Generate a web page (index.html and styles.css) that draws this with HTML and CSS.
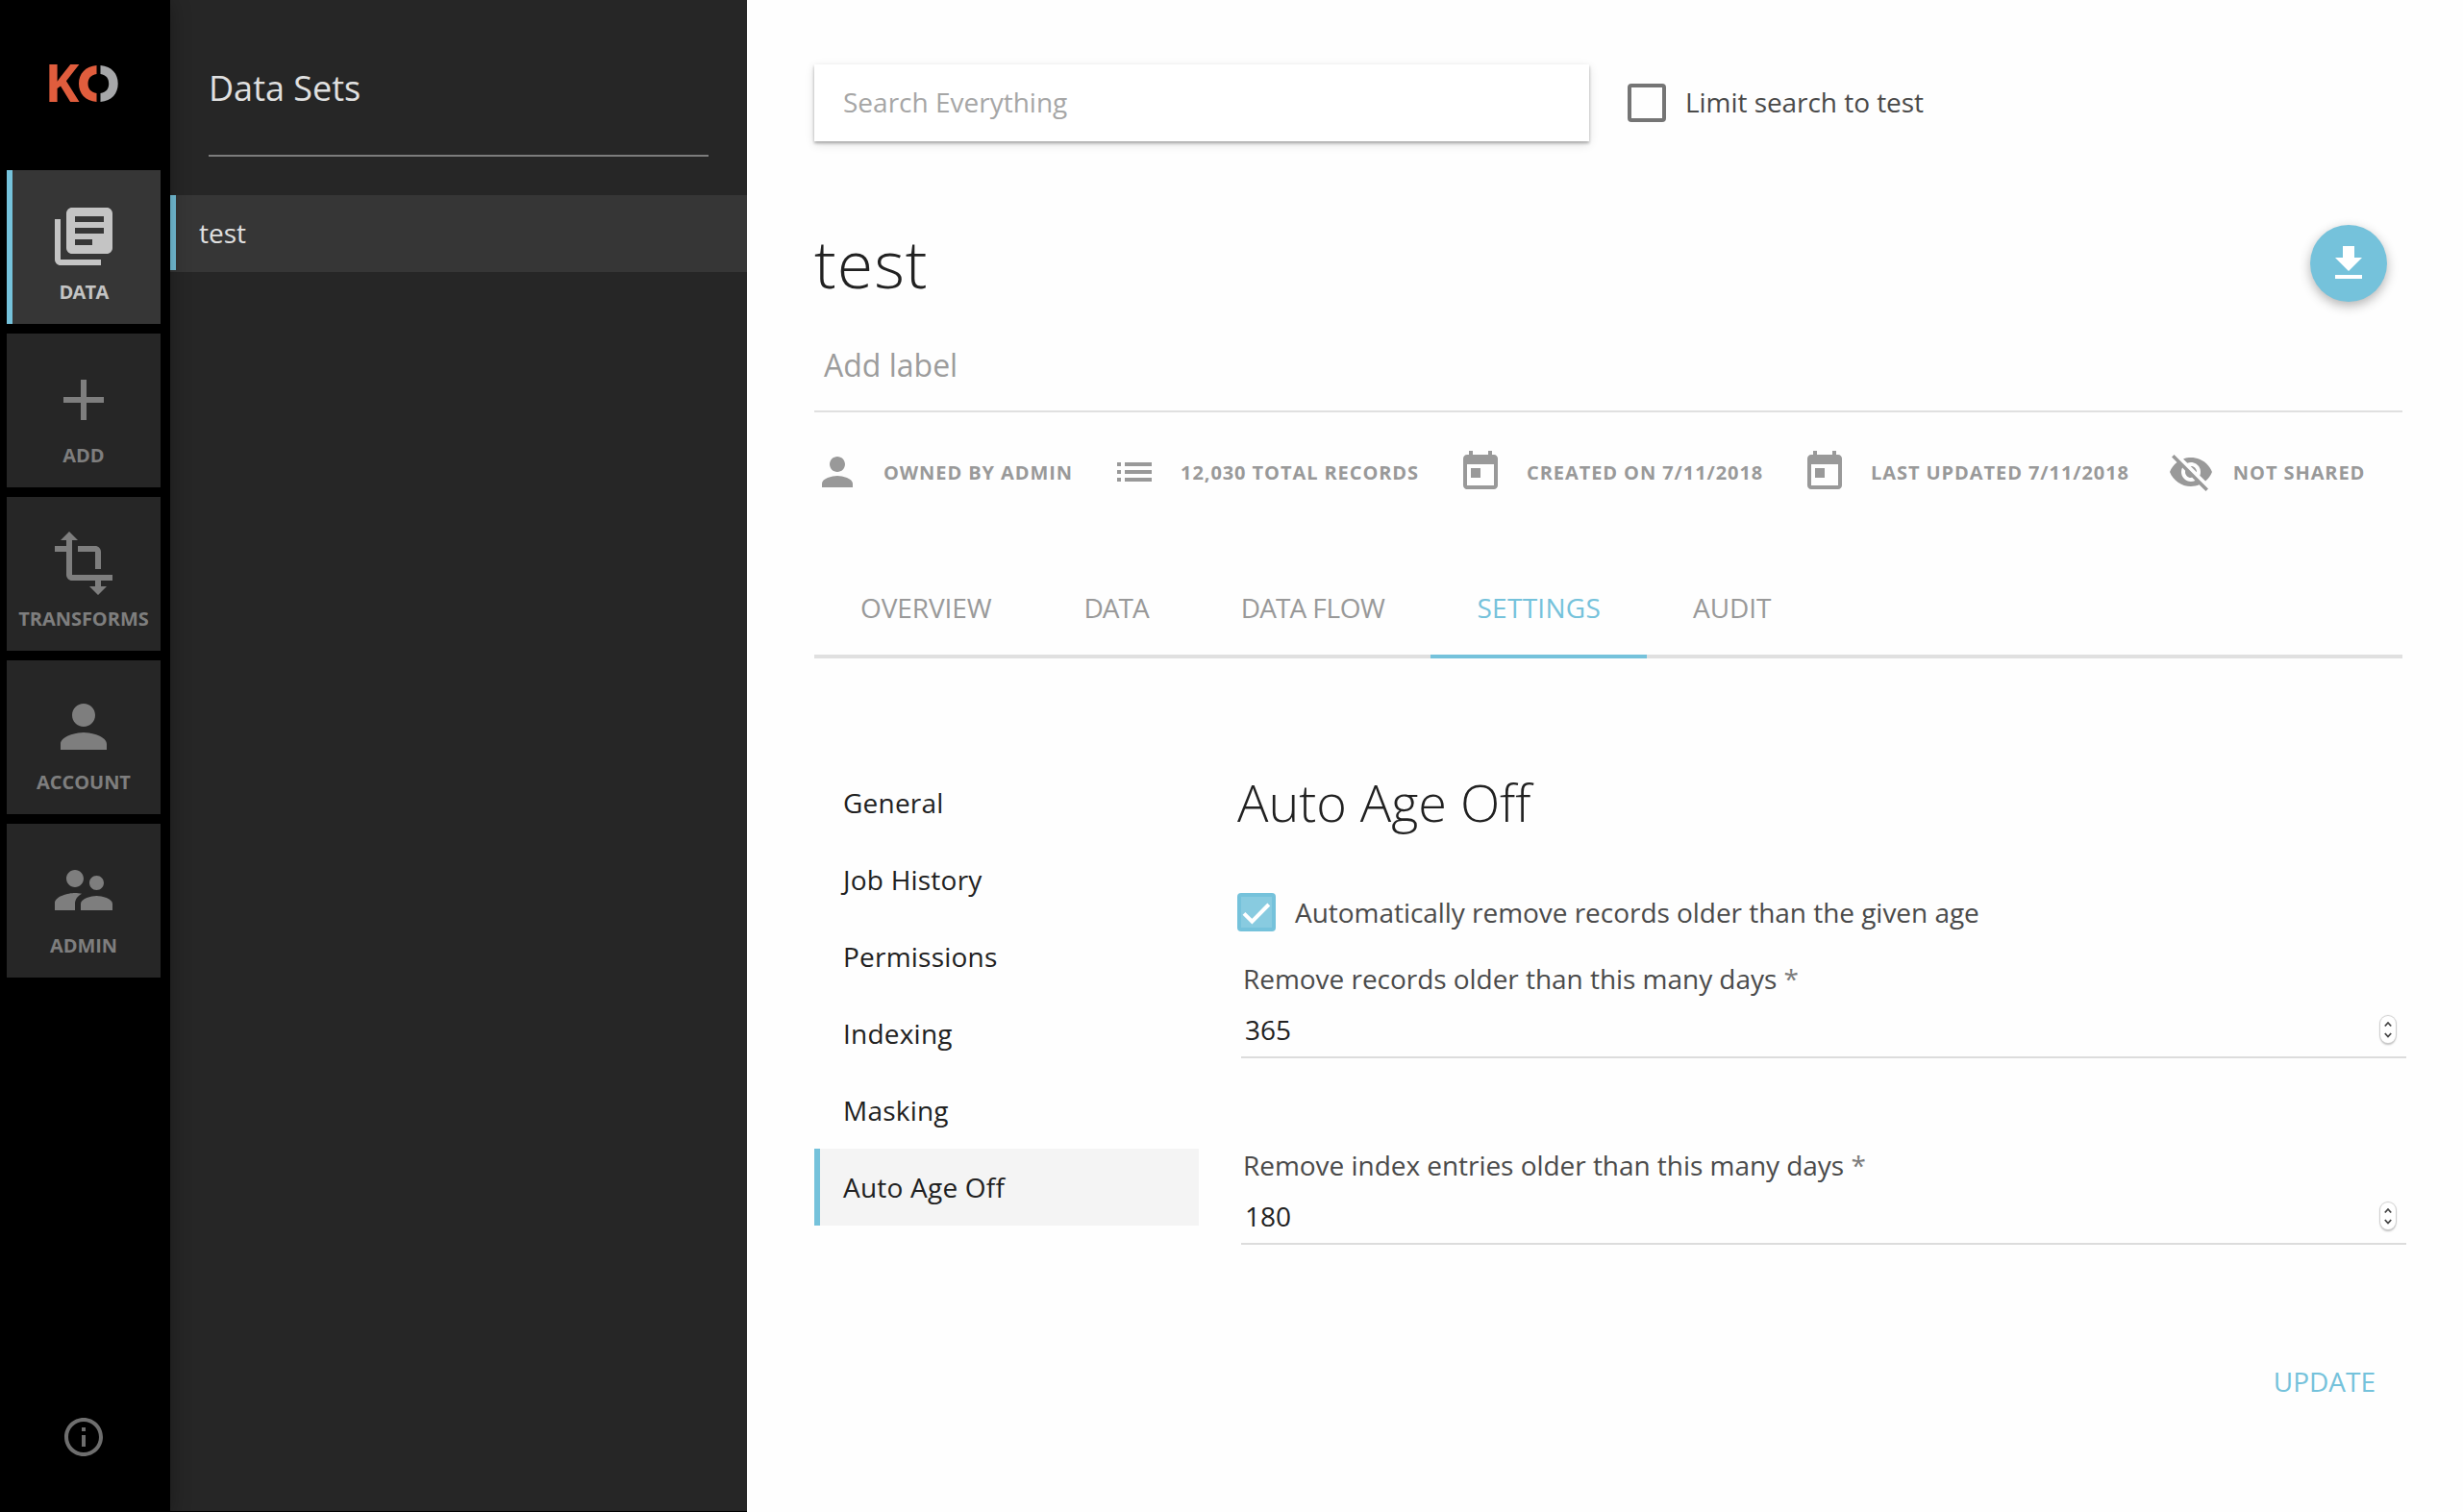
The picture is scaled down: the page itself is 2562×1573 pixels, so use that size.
FILE: index.html
```html
<!DOCTYPE html>
<html lang="en">
<head>
<meta charset="utf-8">
<title>Data Sets</title>
<link rel="stylesheet" href="styles.css">
</head>
<body>
<div class="app">
  <nav class="rail">
    <div class="logo">
      <svg width="96" height="80" viewBox="-11 -25 96 80">
        <text class="logo-k" x="-3.500" y="39" textLength="36" lengthAdjust="spacingAndGlyphs">K</text>
        <path fill="#e05d3d" d="M50.500 1C38.500 2 32 10 32 20S38.500 38 50.500 39V30C44.500 29 41.500 25.500 41.500 20S44.500 11 50.500 10Z"/>
        <path fill="#a6a7a9" d="M54.500 1C66.500 2 72.700 10 72.700 20S66.500 38 54.500 39V30C60.500 29 63.200 25.500 63.200 20S60.500 11 54.500 10Z"/>
      </svg>
    </div>
    <a class="tile active"><svg class="icon" viewBox="0 0 24 24"><path d="M4 6H2v14c0 1.100.9 2 2 2h14v-2H4V6zm16-4H8c-1.100 0-2 .9-2 2v12c0 1.100.9 2 2 2h12c1.100 0 2-.9 2-2V4c0-1.100-.9-2-2-2zm-1 9H9V9h10v2zm-4 4H9v-2h6v2zm4-8H9V5h10v2z"/></svg><span class="snug">DATA</span></a>
    <a class="tile"><svg class="icon" viewBox="0 0 24 24"><path d="M19 13h-6v6h-2v-6H5v-2h6V5h2v6h6v2z"/></svg><span>ADD</span></a>
    <a class="tile"><svg class="icon" viewBox="0 0 24 24"><path d="M22 18v-2H8V4h2L7 1 4 4h2v2H2v2h4v8c0 1.100.9 2 2 2h8v2h-2l3 3 3-3h-2v-2h4zM10 8h6v6h2V8c0-1.100-.9-2-2-2h-6v2z"/></svg><span>TRANSFORMS</span></a>
    <a class="tile"><svg class="icon" viewBox="0 0 24 24"><path d="M12 12c2.210 0 4-1.790 4-4s-1.790-4-4-4-4 1.790-4 4 1.790 4 4 4zm0 2c-2.670 0-8 1.340-8 4v2h16v-2c0-2.660-5.330-4-8-4z"/></svg><span>ACCOUNT</span></a>
    <a class="tile"><svg class="icon" viewBox="0 0 24 24"><path d="M16.500 12c1.380 0 2.490-1.120 2.490-2.500S17.880 7 16.500 7C15.120 7 14 8.120 14 9.500s1.120 2.500 2.500 2.500zM9 11c1.660 0 2.990-1.340 2.990-3S10.660 5 9 5C7.340 5 6 6.340 6 8s1.340 3 3 3zm7.500 3c-1.830 0-5.500.92-5.500 2.750V19h11v-2.250c0-1.830-3.670-2.750-5.500-2.750zM9 13c-2.330 0-7 1.170-7 3.500V19h7v-2.250c0-.85.33-2.340 2.370-3.470C10.500 13.100 9.660 13 9 13z"/></svg><span>ADMIN</span></a>
    <svg class="info" viewBox="0 0 24 24"><path d="M11 17h2v-6h-2v6zm1-15C6.480 2 2 6.480 2 12s4.480 10 10 10 10-4.480 10-10S17.520 2 12 2zm0 18c-4.410 0-8-3.590-8-8s3.590-8 8-8 8 3.590 8 8-3.590 8-8 8zM11 9h2V7h-2v2z"/></svg>
  </nav>

  <aside class="panel">
    <h2 class="panel-title">Data Sets</h2>
    <a class="set">test</a>
  </aside>

  <main class="main">
    <div class="search-row">
      <div class="search">Search Everything</div>
      <span class="box"></span>
      <span class="limit">Limit search to test</span>
    </div>

    <header class="title-row">
      <h1 class="title">test</h1>
      <button class="fab"><svg viewBox="0 0 24 24"><path d="M19 9h-4V3H9v6H5l7 7 7-7zM5 18v2h14v-2H5z"/></svg></button>
    </header>
    <div class="add-label">Add label</div>

    <div class="meta">
      <div class="meta-item"><svg viewBox="0 0 24 24"><path d="M12 12c2.210 0 4-1.790 4-4s-1.790-4-4-4-4 1.790-4 4 1.790 4 4 4zm0 2c-2.670 0-8 1.340-8 4v2h16v-2c0-2.660-5.330-4-8-4z"/></svg><span>OWNED BY ADMIN</span></div>
      <div class="meta-item"><svg viewBox="0 0 24 24"><path d="M3 13h2v-2H3v2zm0 4h2v-2H3v2zm0-8h2V7H3v2zm4 4h14v-2H7v2zm0 4h14v-2H7v2zM7 7v2h14V7H7z"/></svg><span>12,030 TOTAL RECORDS</span></div>
      <div class="meta-item"><svg viewBox="0 0 24 24"><path d="M19 3h-1V1h-2v2H8V1H6v2H5c-1.110 0-1.990.9-1.990 2L3 19c0 1.100.89 2 2 2h14c1.100 0 2-.9 2-2V5c0-1.100-.9-2-2-2zm0 16H5V8h14v11zM7 10h5v5H7z"/></svg><span>CREATED ON 7/11/2018</span></div>
      <div class="meta-item"><svg viewBox="0 0 24 24"><path d="M19 3h-1V1h-2v2H8V1H6v2H5c-1.110 0-1.990.9-1.990 2L3 19c0 1.100.89 2 2 2h14c1.100 0 2-.9 2-2V5c0-1.100-.9-2-2-2zm0 16H5V8h14v11zM7 10h5v5H7z"/></svg><span>LAST UPDATED 7/11/2018</span></div>
      <div class="meta-item tight"><svg viewBox="0 0 24 24"><path d="M12 7c2.760 0 5 2.240 5 5 0 .65-.13 1.260-.36 1.830l2.920 2.920c1.510-1.260 2.700-2.890 3.430-4.750-1.730-4.390-6-7.500-11-7.500-1.400 0-2.740.25-3.980.7l2.160 2.160C10.740 7.130 11.350 7 12 7zM2 4.270l2.280 2.280.46.46C3.080 8.300 1.780 10.020 1 12c1.730 4.390 6 7.500 11 7.500 1.550 0 3.030-.3 4.380-.84l.42.42L19.730 22 21 20.730 3.270 3 2 4.270zM7.530 9.800l1.550 1.550c-.05.21-.08.43-.08.650 0 1.660 1.340 3 3 3 .22 0 .44-.03.650-.08l1.550 1.550c-.67.33-1.410.53-2.200.53-2.760 0-5-2.240-5-5 0-.79.2-1.530.53-2.200zm4.310-.78l3.150 3.150.02-.16c0-1.660-1.340-3-3-3l-.17.010z"/></svg><span>NOT SHARED</span></div>
    </div>

    <div class="tabs">
      <a class="tab">OVERVIEW</a>
      <a class="tab"><span class="snug">DATA</span></a>
      <a class="tab"><span class="snug">DATA</span> <span class="semi">FLOW</span></a>
      <a class="tab selected">SETTINGS</a>
      <a class="tab">AUDIT</a>
    </div>

    <div class="settings">
      <div class="subnav">
        <a>General</a>
        <a>Job History</a>
        <a>Permissions</a>
        <a>Indexing</a>
        <a>Masking</a>
        <a class="current">Auto Age Off</a>
      </div>
      <section class="form">
        <h2 class="form-title">Auto Age Off</h2>
        <div class="check-row">
          <svg class="checked" viewBox="0 0 40 40"><rect width="40" height="40" rx="4" fill="#75c2db"/><rect x="4" y="4" width="32" height="32" fill="#88cbe0"/><path d="M7 21.300L15.400 29.600L32.800 12" fill="none" stroke="#fff" stroke-width="4"/></svg>
          <span>Automatically remove records older than the given age</span>
        </div>
        <div class="field">
          <label>Remove records older than this many days <i>*</i></label>
          <div class="value"><span>365</span><svg class="spin" viewBox="0 0 16 28"><path d="M4.800 10.500L8 7L11.200 10.500M4.800 18L8 21.500L11.200 18"/></svg></div>
        </div>
        <div class="field">
          <label>Remove index entries older than this many days <i>*</i></label>
          <div class="value"><span>180</span><svg class="spin" viewBox="0 0 16 28"><path d="M4.800 10.500L8 7L11.200 10.500M4.800 18L8 21.500L11.200 18"/></svg></div>
        </div>
        <button class="update">UPDATE</button>
      </section>
    </div>
  </main>
</div>
</body>
</html>
```
FILE: styles.css
```css
* { box-sizing: border-box; }
body {
  margin: 0;
  font-family: "Open Sans", "Noto Sans", sans-serif;
  font-size: 28px;
  font-kerning: normal;
  text-rendering: optimizeLegibility;
  color: #212121;
  background: #fefefe;
}
h1, h2 { margin: 0; font-weight: 300; }
button { border: 0; padding: 0; background: none; font: inherit; }
svg { display: block; flex: none; }

.app { display: flex; width: 2562px; height: 1573px; overflow: hidden; }

/* Icon rail */
.rail {
  position: relative;
  z-index: 1;
  flex: none;
  width: 177px;
  padding: 42px 10px 54px 7px;
  display: flex;
  flex-direction: column;
  align-items: center;
  gap: 10px;
  background: #000;
  box-shadow: 0 2px 20px rgba(0, 0, 0, .3);
}
.logo { height: 125px; }
.logo-k { font-size: 53px; font-weight: 700; fill: #e05d3d; }
.tile {
  flex: none;
  width: 160px;
  height: 160px;
  padding-top: 33px;
  display: flex;
  flex-direction: column;
  align-items: center;
  background: #262626;
  color: #7e7e7e;
  font-size: 20px;
  line-height: 28px;
  font-weight: 700;
  letter-spacing: -.05px;
}
.tile span { margin-top: 8px; }
.tile .snug { letter-spacing: -.8px; }
.tile.active { background: #363636; color: #c4c4c4; box-shadow: inset 6px 0 #75c2db; }
.icon { width: 72px; height: 72px; fill: currentColor; }
.info { width: 48px; height: 48px; margin-top: auto; fill: #6e6e6e; }

/* Data set list */
.panel {
  flex: none;
  width: 600px;
  background: #262626;
  color: #e0e0e0;
  border-bottom: 1px solid #000;
}
.panel-title {
  margin: 0 40px 40px;
  height: 163px;
  padding-top: 67px;
  border-bottom: 2px solid #7c7c7c;
  font-size: 36px;
  line-height: 50px;
  font-weight: 400;
}
.set {
  display: block;
  height: 80px;
  padding-left: 30px;
  line-height: 78px;
  background: linear-gradient(#75c2db, #75c2db) 0 0 / 6px 78px no-repeat #363636;
}

/* Main column */
.main { flex: 1; padding: 67px 63px 0 70px; }
.search-row { display: flex; align-items: center; height: 80px; }
.search {
  width: 806px;
  height: 80px;
  padding-left: 30px;
  line-height: 78px;
  color: #a6a6a6;
  background: #fff;
  box-shadow: 0 2px 3px rgba(0, 0, 0, .3), 0 3px 10px rgba(0, 0, 0, .12);
}
.box { width: 40px; height: 40px; margin: 0 20px 0 40px; border: 4px solid #757575; border-radius: 4px; }
.limit { height: 80px; line-height: 78px; color: #4a4a4a; letter-spacing: -.05px; }

.title-row { display: flex; justify-content: space-between; height: 100px; margin-top: 77px; padding: 10px 16px 0 0; }
.title { font-size: 68px; line-height: 80px; letter-spacing: .015em; }
.fab {
  width: 80px;
  height: 80px;
  padding: 16px;
  border-radius: 50%;
  background: #75c2db;
  box-shadow: 0 4px 12px rgba(0, 0, 0, .3);
}
.fab svg { width: 48px; height: 48px; fill: #fff; }
.add-label {
  height: 105px;
  padding: 36px 0 0 10px;
  border-bottom: 2px solid #e0e0e0;
  font-size: 32px;
  line-height: 40px;
  color: #9c9c9c;
}

.meta { display: flex; gap: 40px; margin-top: 38px; height: 48px; }
.meta-item {
  display: flex;
  align-items: center;
  gap: 24px;
  font-size: 20px;
  font-weight: 700;
  letter-spacing: .92px;
  white-space: nowrap;
  color: #999;
}
.meta-item svg { width: 48px; height: 48px; fill: currentColor; }
.meta-item.tight { gap: 20px; }

.tabs { display: flex; height: 106px; margin-top: 64px; border-bottom: 4px solid #e0e0e0; }
.tab { height: 106px; padding: 0 48px; line-height: 106px; letter-spacing: -.1px; color: #999; }
.tab .snug { letter-spacing: -.95px; }
.tab .semi { letter-spacing: -.4px; }
.tab.selected { color: #75c2db; border-bottom: 4px solid #75c2db; letter-spacing: .28px; }

.settings { display: flex; margin-top: 110px; margin-right: -4px; }
.subnav { width: 400px; letter-spacing: .22px; }
.subnav a { display: block; height: 80px; padding-left: 30px; line-height: 80px; }
.subnav .current { background: #f4f4f4; box-shadow: inset 6px 0 #75c2db; }

.form { flex: 1; padding-left: 40px; color: #4a4a4a; letter-spacing: -.04px; }
.form-title { height: 134px; font-size: 54px; line-height: 78px; color: #212121; }
.check-row { display: flex; align-items: center; gap: 20px; height: 40px; }
.checked { width: 40px; height: 40px; }
.field { height: 194px; padding: 29px 0 0 4px; }
.field label { display: block; height: 40px; padding-left: 2px; line-height: 40px; }
.field i { font-style: normal; color: #7c7c7c; }
.value {
  display: flex;
  justify-content: space-between;
  align-items: center;
  height: 63px;
  padding: 4px 11px 0 4px;
  border-bottom: 2px solid #dcdcdc;
  color: #212121;
}
.spin {
  width: 16px;
  height: 28px;
  border-radius: 8px;
  background: #fff;
  box-shadow: 0 0 1px 1px #ccc, 0 2px 2px rgba(0, 0, 0, .25);
  fill: none;
  stroke: #444;
  stroke-width: 1.8;
}
.update { display: block; margin: 58px 32px 0 auto; line-height: 44px; color: #75c2db; }
```
